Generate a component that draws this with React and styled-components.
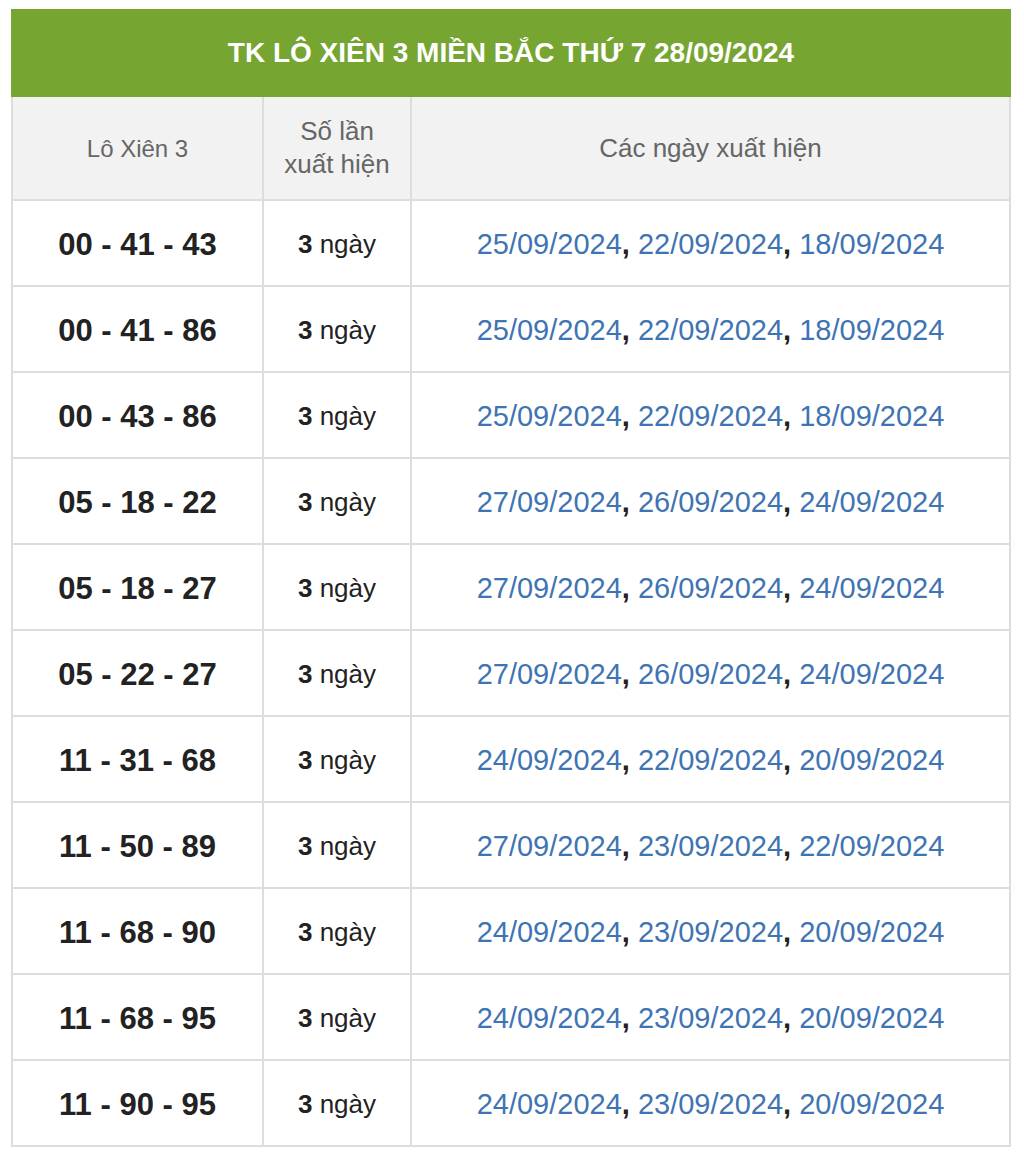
import React from 'react';
import styled, { createGlobalStyle } from 'styled-components';

const GlobalStyle = createGlobalStyle`
    body {
        margin: 0;
        background: #fff;
        font-family: 'Liberation Sans', Arial, sans-serif;
    }
`;

const Wrapper = styled.div`
    padding: 9px 13px 16px 11px;
`;

const Table = styled.table`
    width: 1000px;
    border-collapse: collapse;
    table-layout: fixed;
`;

const TitleCell = styled.th`
    background-color: #77a532;
    color: #fff;
    font-size: 28px;
    font-weight: bold;
    height: 84px;
    padding: 0;
    text-align: center;
    border: 2px solid #77a532;
`;

const HeadCell = styled.th`
    background-color: #f2f2f2;
    color: #666;
    font-weight: normal;
    font-size: ${(p) => p.size || 26}px;
    line-height: 33px;
    height: 102px;
    padding: 0 6px;
    border: 2px solid #ddd;
    text-align: center;
`;

const Cell = styled.td`
    border: 2px solid #ddd;
    height: 81px;
    padding: 3px 0 0;
    text-align: center;
    color: #222;
`;

const Numbers = styled(Cell)`
    font-size: 31px;
    font-weight: bold;
`;

const Count = styled(Cell)`
    font-size: 26px;
`;

const Dates = styled(Cell)`
    font-size: 29px;
    font-weight: bold;
`;

const DateLink = styled.a`
    color: #3f74b3;
    font-weight: normal;
    text-decoration: none;
`;

const rows = [
    ['00 - 41 - 43', ['25/09/2024', '22/09/2024', '18/09/2024']],
    ['00 - 41 - 86', ['25/09/2024', '22/09/2024', '18/09/2024']],
    ['00 - 43 - 86', ['25/09/2024', '22/09/2024', '18/09/2024']],
    ['05 - 18 - 22', ['27/09/2024', '26/09/2024', '24/09/2024']],
    ['05 - 18 - 27', ['27/09/2024', '26/09/2024', '24/09/2024']],
    ['05 - 22 - 27', ['27/09/2024', '26/09/2024', '24/09/2024']],
    ['11 - 31 - 68', ['24/09/2024', '22/09/2024', '20/09/2024']],
    ['11 - 50 - 89', ['27/09/2024', '23/09/2024', '22/09/2024']],
    ['11 - 68 - 90', ['24/09/2024', '23/09/2024', '20/09/2024']],
    ['11 - 68 - 95', ['24/09/2024', '23/09/2024', '20/09/2024']],
    ['11 - 90 - 95', ['24/09/2024', '23/09/2024', '20/09/2024']],
];

function App() {
    return (
        <Wrapper>
            <GlobalStyle />
            <Table>
                <colgroup>
                    <col style={{ width: 251 }} />
                    <col style={{ width: 148 }} />
                    <col />
                </colgroup>
                <thead>
                    <tr>
                        <TitleCell colSpan={3}>TK LÔ XIÊN 3 MIỀN BẮC THỨ 7 28/09/2024</TitleCell>
                    </tr>
                    <tr>
                        <HeadCell size={24}>Lô Xiên 3</HeadCell>
                        <HeadCell>Số lần<br />xuất hiện</HeadCell>
                        <HeadCell>Các ngày xuất hiện</HeadCell>
                    </tr>
                </thead>
                <tbody>
                    {rows.map(([nums, dates]) => (
                        <tr key={nums}>
                            <Numbers>{nums}</Numbers>
                            <Count><b>3</b> ngày</Count>
                            <Dates>
                                {dates.map((d, i) => (
                                    <React.Fragment key={d}>
                                        <DateLink href="#">{d}</DateLink>
                                        {i < dates.length - 1 ? ', ' : ''}
                                    </React.Fragment>
                                ))}
                            </Dates>
                        </tr>
                    ))}
                </tbody>
            </Table>
        </Wrapper>
    );
}

export default App;
